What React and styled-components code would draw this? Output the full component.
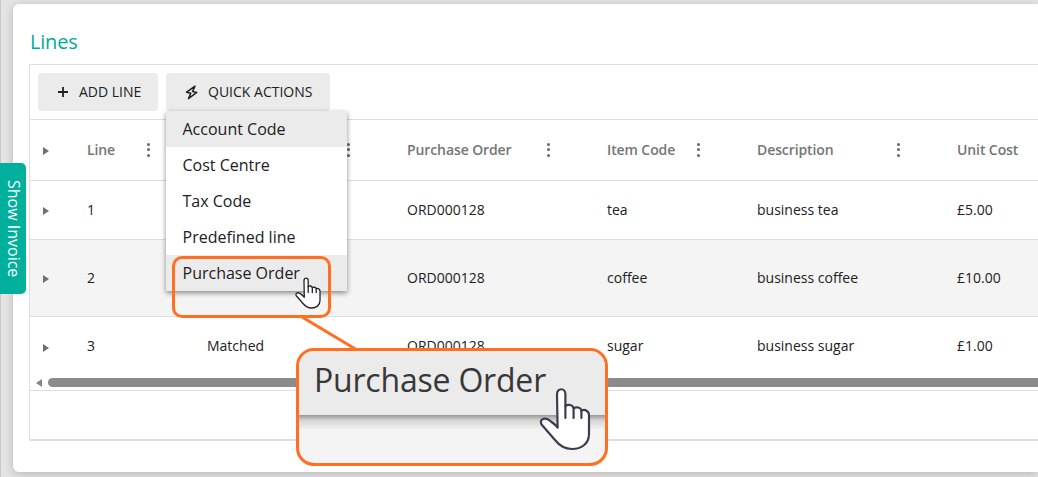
import { styled, createGlobalStyle } from 'styled-components'

const columns = [
  { key: 'line', title: 'Line', width: 120 },
  { key: 'status', title: '', width: 200 },
  { key: 'order', title: 'Purchase Order', width: 200 },
  { key: 'item', title: 'Item Code', width: 150 },
  { key: 'description', title: 'Description', width: 200 },
  { key: 'cost', title: 'Unit Cost', width: 150 },
]

const rows = [
  { line: '1', status: '', order: 'ORD000128', item: 'tea', description: 'business tea', cost: '£5.00', height: 59 },
  { line: '2', status: '', order: 'ORD000128', item: 'coffee', description: 'business coffee', cost: '£10.00', height: 77, alt: true },
  { line: '3', status: 'Matched', order: 'ORD000128', item: 'sugar', description: 'business sugar', cost: '£1.00', height: 60, last: true },
]

const actions = ['Account Code', 'Cost Centre', 'Tax Code', 'Predefined line', 'Purchase Order']

const Expand = () => (
  <ExpandCell>
    <Triangle />
  </ExpandCell>
)

const Hand = ({ width, height, color, stroke }) => (
  <svg width={width} height={height} viewBox='0 0 26 32' fill='#fff' stroke={color} strokeWidth={stroke} strokeLinejoin='round' strokeLinecap='round'>
    <path d='M9.300 20.300L9 3.600C9 .3 13.200.3 13.200 3.600V9.500C14.500 8.500 16.800 8.800 17.300 10.600C18.800 9.700 20.800 10.200 21.200 11.700C23 11 25 12 25 14V23.500C25 28.500 21 31 16.500 31C12.500 31 10 29 8 26.500L1.500 19C-.3 16.500 2.500 14.800 5 16.500C6.500 17.800 8 18.400 9.300 20.300Z' />
    <path d='M13.200 9.500V15.500M17.300 10.600V15.500M21.200 11.700V15.500' fill='none' />
  </svg>
)

const App = () => {
  return (
    <Page>
      <GlobalStyle />
      <Card>
        <Title>Lines</Title>
        <Grid>
          <Toolbar>
            <Button $width={120}>
              <svg width='12' height='12' viewBox='0 0 12 12' stroke='#212121' strokeWidth='1.800'>
                <path d='M6 1v10M1 6h10' />
              </svg>
              <ButtonLabel>Add line</ButtonLabel>
            </Button>
            <Dropdown>
              <Button $width={164}>
                <svg width='13' height='15' viewBox='0 0 13 15' fill='none' stroke='#212121' strokeWidth='1.500' strokeLinejoin='round'>
                  <path d='M10 1.200L1.600 7.200l4.200 1L3.500 13.600l8.300-6.200-4.200-1Z' />
                </svg>
                <ButtonLabel>Quick actions</ButtonLabel>
              </Button>
              <Menu>
                {actions.map((action, i) => (
                  <MenuItem key={action} $active={i === 0 || i === 4}>{action}</MenuItem>
                ))}
              </Menu>
            </Dropdown>
          </Toolbar>
          <HeaderRow>
            <Expand />
            {columns.map(col => (
              <HeaderCell key={col.key} $width={col.width}>
                <span>{col.title}</span>
                <Dots><i /><i /><i /></Dots>
              </HeaderCell>
            ))}
          </HeaderRow>
          {rows.map(row => (
            <Row key={row.line} $height={row.height} $alt={row.alt} $last={row.last}>
              <Expand />
              {columns.map(col => (
                <Cell key={col.key} $width={col.width}>{row[col.key]}</Cell>
              ))}
            </Row>
          ))}
          <ScrollBar>
            <ScrollArrow />
            <ScrollThumb />
          </ScrollBar>
          <Footer />
        </Grid>
      </Card>
      <InvoiceTab>Show Invoice</InvoiceTab>
      <Highlight />
      <SmallPointer>
        <Hand width={26} height={32} color='#22222e' stroke={1.3} />
      </SmallPointer>
      <Connector width='60' height='36' viewBox='0 0 60 36' stroke='#ff6f1f' strokeWidth='3'>
        <path d='M1 1L56 34' />
      </Connector>
      <Callout>
        <CalloutText>Purchase Order</CalloutText>
        <CalloutShade />
        <BigPointer>
          <Hand width={52} height={64} color='#3c3c4c' stroke={1.1} />
        </BigPointer>
      </Callout>
    </Page>
  )
}

const GlobalStyle = createGlobalStyle`
  * {
    box-sizing: border-box;
  }

  body {
    margin: 0;
    overflow: hidden;
    font-family: 'Open Sans', sans-serif;
    color: #212121;
  }
`

const Page = styled.main`
  position: relative;
  width: 1038px;
  height: 477px;
  padding: 4px 0 5px 13px;
  background-color: #e4e4e4;
  box-shadow: inset 1px 0 #c9c9c9;
  overflow: hidden;
`

const Card = styled.section`
  height: 468px;
  padding: 24px 0 0 16px;
  border-radius: 6px 0 0 6px;
  background-color: white;
  box-shadow: 0 2px 10px rgba(0, 0, 0, .2);
`

const Title = styled.h1`
  margin: 0;
  padding-left: 1px;
  height: 36px;
  line-height: 28px;
  font-size: 20px;
  font-weight: 400;
  letter-spacing: -.2px;
  color: #00ac98;
`

const Grid = styled.div`
  height: 377px;
  border: 1px solid #dedede;
  border-right: none;
  border-bottom-width: 2px;
`

const Toolbar = styled.div`
  display: flex;
  gap: 8px;
  height: 55px;
  padding: 8px;
  border-bottom: 1px solid #dedede;
`

const Button = styled.button`
  display: flex;
  align-items: center;
  gap: 10px;
  width: ${({ $width }) => $width}px;
  height: 38px;
  padding: 0 0 0 19px;
  border: none;
  border-radius: 4px;
  background-color: #ebebeb;
  font-family: inherit;
  font-size: 14px;
  color: #212121;
  white-space: nowrap;
`

const ButtonLabel = styled.span`
  padding-bottom: 2px;
  text-transform: uppercase;
`

const Dropdown = styled.div`
  position: relative;
`

const Menu = styled.ul`
  position: absolute;
  z-index: 1;
  top: 38px;
  left: 0;
  width: 181px;
  margin: 0;
  padding: 0;
  list-style: none;
  background-color: white;
  box-shadow: 0 2px 5px rgba(0, 0, 0, .45);
`

const MenuItem = styled.li`
  height: 36px;
  padding-left: 16.5px;
  line-height: 37px;
  font-size: 16px;
  background-color: ${({ $active }) => $active ? '#ebebeb' : 'white'};
`

const HeaderRow = styled.div`
  display: flex;
  height: 61px;
  border-bottom: 1px solid #dedede;
  overflow: hidden;
`

const ExpandCell = styled.div`
  display: flex;
  flex-shrink: 0;
  align-items: center;
  width: 41px;
  padding: 2px 0 0 13px;
`

const Triangle = styled.span`
  border: 4px solid transparent;
  border-left: 6px solid #707070;
  border-right: none;
`

const HeaderCell = styled.div`
  display: flex;
  flex-shrink: 0;
  align-items: center;
  justify-content: space-between;
  width: ${({ $width }) => $width}px;
  padding: 0 41px 0 16px;
  font-size: 14px;
  font-weight: 600;
  letter-spacing: -.1px;
  color: #757575;
  white-space: nowrap;

  > span:first-child {
    padding-bottom: 2px;
  }
`

const Dots = styled.span`
  display: flex;
  flex-direction: column;
  gap: 2.5px;
  padding-bottom: 1px;

  i {
    width: 3px;
    height: 3px;
    border-radius: 50%;
    background-color: #666;
  }
`

const Row = styled.div`
  display: flex;
  height: ${({ $height }) => $height}px;
  padding-bottom: ${({ $last }) => $last ? 1 : 0}px;
  border-bottom: ${({ $last }) => $last ? 'none' : '1px solid #dedede'};
  background-color: ${({ $alt }) => $alt ? '#f4f4f4' : 'white'};
  overflow: hidden;
`

const Cell = styled.div`
  display: flex;
  flex-shrink: 0;
  align-items: center;
  width: ${({ $width }) => $width}px;
  padding: 0 0 2px 16px;
  font-size: 14px;
`

const ScrollBar = styled.div`
  display: flex;
  align-items: center;
  gap: 6px;
  height: 14px;
  padding: 0 0 2px 6px;
  border-bottom: 1px solid #dedede;
`

const ScrollArrow = styled.span`
  border: 4px solid transparent;
  border-right: 6px solid #858585;
  border-left: none;
`

const ScrollThumb = styled.span`
  flex: 1;
  height: 9px;
  border-radius: 5px 0 0 5px;
  background-color: #8b8b8b;
`

const Footer = styled.div`
  height: 48px;
`

const InvoiceTab = styled.aside`
  position: absolute;
  top: 163px;
  left: 0;
  width: 26px;
  height: 131px;
  border-radius: 0 5px 5px 0;
  background-color: #00b09c;
  color: white;
  font-size: 16px;
  line-height: 24px;
  text-align: center;
  writing-mode: vertical-rl;
`

const Highlight = styled.div`
  position: absolute;
  z-index: 2;
  top: 256px;
  left: 172px;
  width: 159px;
  height: 62px;
  border: 3px solid #ff6f1f;
  border-radius: 10px;
`

const SmallPointer = styled.div`
  position: absolute;
  z-index: 3;
  top: 277px;
  left: 295px;
  line-height: 0;
`

const Connector = styled.svg`
  position: absolute;
  z-index: 2;
  top: 316px;
  left: 301px;
`

const Callout = styled.div`
  position: absolute;
  z-index: 3;
  top: 348px;
  left: 296px;
  width: 312px;
  height: 118px;
  border: 3px solid #ff6f1f;
  border-radius: 18px;
  background-color: #f4f4f4;
  overflow: hidden;
`

const CalloutText = styled.div`
  height: 64px;
  padding-left: 15px;
  background-color: #ebebeb;
  color: #383838;
  font-size: 32px;
  line-height: 58px;
  letter-spacing: -.2px;
`

const CalloutShade = styled.div`
  height: 15px;
  background: linear-gradient(#989898, #d4d4d4 35%, #f4f4f4);
`

const BigPointer = styled.div`
  position: absolute;
  top: 36px;
  left: 240px;
  line-height: 0;
`

export default App
